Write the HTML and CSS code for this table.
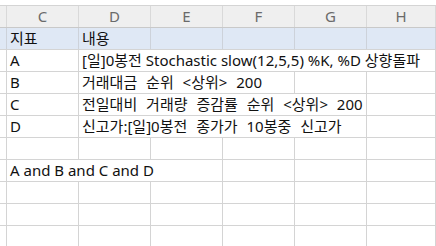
FILE: index.html
```html
<!DOCTYPE html>
<html lang="ko">
<head>
    <meta charset="UTF-8">
    <meta name="viewport" content="width=device-width, initial-scale=1.0">
    <title>조건식</title>
    <link rel="stylesheet" href="styles.css">
</head>
<body>
    <div class="sheet">
        <div class="row col-head">
            <div class="cell stub"></div>
            <div class="cell">C</div>
            <div class="cell">D</div>
            <div class="cell">E</div>
            <div class="cell">F</div>
            <div class="cell">G</div>
            <div class="cell">H</div>
        </div>

        <div class="row title-row">
            <div class="cell stub"></div>
            <div class="cell">지표</div>
            <div class="cell">내용</div>
            <div class="cell"></div>
            <div class="cell"></div>
            <div class="cell"></div>
            <div class="cell"></div>
        </div>

        <div class="row">
            <div class="cell stub"></div>
            <div class="cell">A</div>
            <div class="cell span-5">[일]0봉전 Stochastic slow(12,5,5) %K, %D 상향돌파</div>
        </div>

        <div class="row">
            <div class="cell stub"></div>
            <div class="cell">B</div>
            <div class="cell span-3 ko-words">거래대금 순위 &lt;상위&gt; 200</div>
            <div class="cell"></div>
            <div class="cell"></div>
        </div>

        <div class="row">
            <div class="cell stub"></div>
            <div class="cell">C</div>
            <div class="cell span-4 ko-words">전일대비 거래량 증감률 순위 &lt;상위&gt; 200</div>
            <div class="cell"></div>
        </div>

        <div class="row">
            <div class="cell stub"></div>
            <div class="cell">D</div>
            <div class="cell span-4 ko-words">신고가:[일]0봉전 종가가 10봉중 신고가</div>
            <div class="cell"></div>
        </div>

        <div class="row">
            <div class="cell stub"></div>
            <div class="cell"></div>
            <div class="cell"></div>
            <div class="cell"></div>
            <div class="cell"></div>
            <div class="cell"></div>
            <div class="cell"></div>
        </div>

        <div class="row">
            <div class="cell stub"></div>
            <div class="cell span-3">A and B and C and D</div>
            <div class="cell"></div>
            <div class="cell"></div>
            <div class="cell"></div>
        </div>

        <div class="row">
            <div class="cell stub"></div>
            <div class="cell"></div>
            <div class="cell"></div>
            <div class="cell"></div>
            <div class="cell"></div>
            <div class="cell"></div>
            <div class="cell"></div>
        </div>

        <div class="row">
            <div class="cell stub"></div>
            <div class="cell"></div>
            <div class="cell"></div>
            <div class="cell"></div>
            <div class="cell"></div>
            <div class="cell"></div>
            <div class="cell"></div>
        </div>

        <div class="row">
            <div class="cell stub"></div>
            <div class="cell"></div>
            <div class="cell"></div>
            <div class="cell"></div>
            <div class="cell"></div>
            <div class="cell"></div>
            <div class="cell"></div>
        </div>
    </div>
</body>
</html>
```

FILE: styles.css
```css
body {
    margin: 0;
    background: #ffffff;
    font-family: "Noto Sans", "Noto Sans CJK KR", sans-serif;
    font-size: 15px;
    color: #111111;
    overflow: hidden;
}
.sheet {
    padding-top: 5px;
    width: 436px;
}
.row {
    display: grid;
    grid-template-columns: 7px repeat(5, 72px) 1fr;
    height: 22px;
    border-bottom: 1px solid #d4d4d4;
    box-sizing: border-box;
}
.cell {
    border-right: 1px solid #d4d4d4;
    padding-left: 3px;
    line-height: 21px;
    white-space: nowrap;
    overflow: visible;
}
.stub {
    padding-left: 0;
}
.span-3 {
    grid-column: span 3;
}
.span-4 {
    grid-column: span 4;
}
.span-5 {
    grid-column: span 5;
}
/* hangul phrases get the wider gaps between words */
.ko-words {
    word-spacing: 5px;
}
.col-head {
    height: 23px;
    background: #efefef;
    border-top: 1px solid #d4d4d4;
    border-bottom-color: #c9c9c9;
    color: #6a6a6a;
}
.col-head .cell {
    text-align: center;
    padding-left: 0;
    border-right-color: #d9d9d9;
}
.title-row {
    background: #dfe8f5;
}
.title-row .cell {
    border-right-color: #cdd2da;
}
```
